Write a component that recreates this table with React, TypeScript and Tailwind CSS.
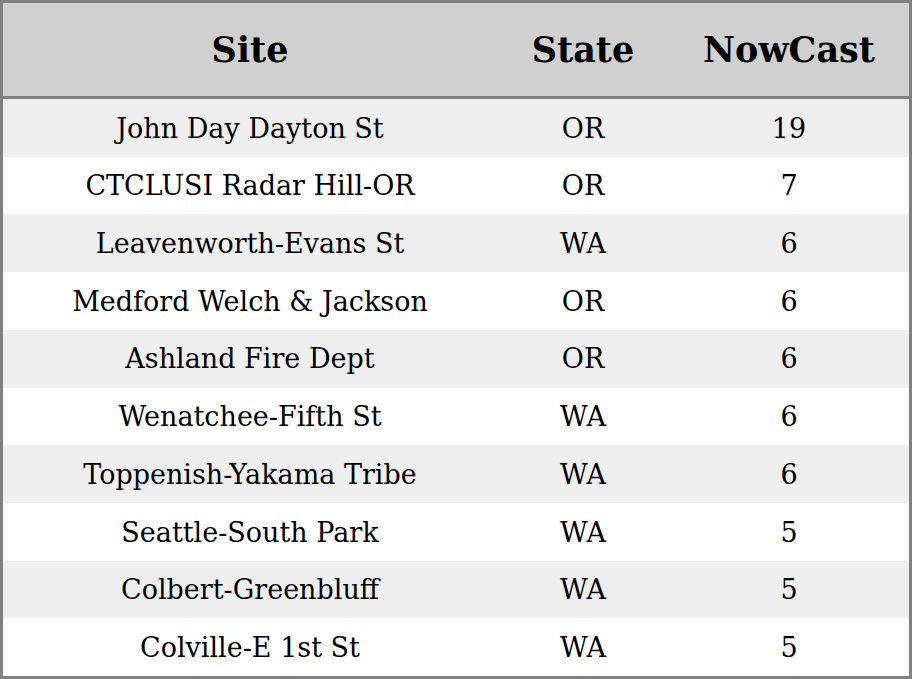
const rows = [
  { site: "John Day Dayton St", state: "OR", nowcast: 19 },
  { site: "CTCLUSI Radar Hill-OR", state: "OR", nowcast: 7 },
  { site: "Leavenworth-Evans St", state: "WA", nowcast: 6 },
  { site: "Medford Welch & Jackson", state: "OR", nowcast: 6 },
  { site: "Ashland Fire Dept", state: "OR", nowcast: 6 },
  { site: "Wenatchee-Fifth St", state: "WA", nowcast: 6 },
  { site: "Toppenish-Yakama Tribe", state: "WA", nowcast: 6 },
  { site: "Seattle-South Park", state: "WA", nowcast: 5 },
  { site: "Colbert-Greenbluff", state: "WA", nowcast: 5 },
  { site: "Colville-E 1st St", state: "WA", nowcast: 5 },
];

export default function App() {
  return (
    <div
      className="w-[912px] h-[679px] border-[3px] border-[#808080] flex flex-col text-black"
      style={{ fontFamily: '"DejaVu Serif", serif' }}
    >
      {/* Header */}
      <div className="h-[96px] shrink-0 flex items-center pt-[2px] bg-[#d0d0d0] border-b-[3px] border-[#808080] text-[35px] font-bold">
        <div className="w-[494px] text-center">Site</div>
        <div className="w-[172px] text-center">State</div>
        <div className="flex-1 text-center">NowCast</div>
      </div>

      {/* Rows */}
      {rows.map((r, i) => (
        <div
          key={r.site}
          className={`flex-1 flex items-center pt-[2px] text-[27px] ${i % 2 === 0 ? "bg-[#efefef]" : "bg-white"}`}
        >
          <div className="w-[494px] text-center">{r.site}</div>
          <div className="w-[172px] text-center">{r.state}</div>
          <div className="flex-1 text-center">{r.nowcast}</div>
        </div>
      ))}
    </div>
  );
}
